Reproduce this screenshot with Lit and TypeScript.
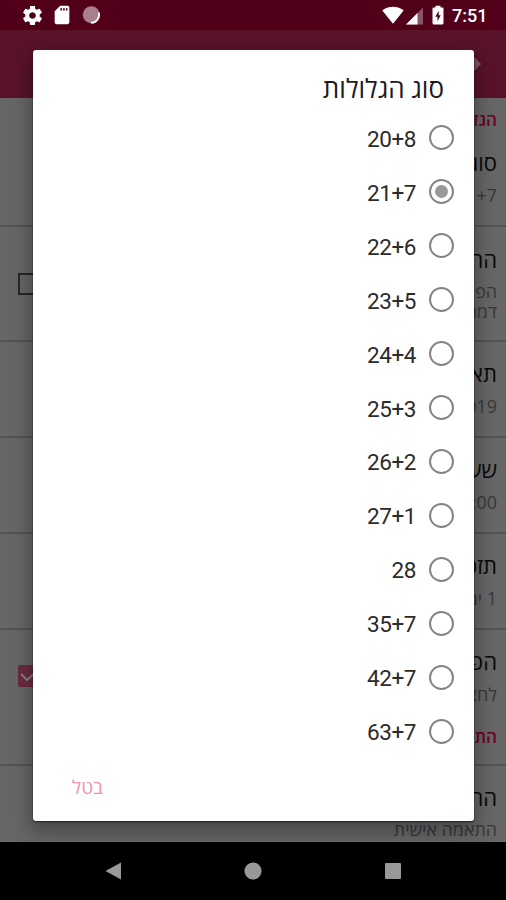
import { LitElement, html, css, svg, nothing } from "lit";
import { customElement, property } from "lit/decorators.js";
import { classMap } from "lit/directives/class-map.js";

interface Pref {
  title: string;
  lines: string[];
  height: "first" | "tall" | "normal" | "short" | "last";
  check?: "on" | "off";
}

@customElement("status-bar")
export class StatusBar extends LitElement {
  static styles = css`
    :host {
      display: flex;
      direction: ltr;
      align-items: center;
      height: 30px;
      box-sizing: border-box;
      padding: 0 20px 0 21px;
      background: #52001a;
      color: #fff;
      font: 500 18px/30px Roboto, sans-serif;
    }
    svg { display: block; flex: none; fill: #fff; }
    .card { margin-left: 7px; }
    .sync { margin-left: 9px; }
    .gap { flex: 1; }
    .signal { margin-left: 1px; }
    .battery { margin-left: 2px; }
    .time { margin: 2px 0 0 5px; width: 34px; white-space: nowrap; }
  `;
  render() {
    return html`
      <svg width="23" height="23" viewBox="0 0 24 24"><path d="M19.43 12.98c.04-.32.07-.64.07-.98s-.03-.66-.07-.98l2.11-1.65c.19-.15.24-.42.12-.64l-2-3.46c-.12-.22-.39-.3-.61-.22l-2.49 1c-.52-.4-1.08-.73-1.69-.98l-.38-2.65C14.46 2.18 14.25 2 14 2h-4c-.25 0-.46.18-.49.42l-.38 2.65c-.61.25-1.17.59-1.69.98l-2.49-1c-.23-.09-.49 0-.61.22l-2 3.46c-.13.22-.07.49.12.64l2.11 1.65c-.04.32-.07.65-.07.98s.03.66.07.98l-2.11 1.65c-.19.15-.24.42-.12.64l2 3.46c.12.22.39.3.61.22l2.49-1c.52.4 1.08.73 1.69.98l.38 2.65c.03.24.24.42.49.42h4c.25 0 .46-.18.49-.42l.38-2.65c.61-.25 1.17-.59 1.69-.98l2.49 1c.23.09.49 0 .61-.22l2-3.46c.12-.22.07-.49-.12-.64l-2.11-1.65zM12 15.5c-1.93 0-3.500-1.570-3.500-3.500s1.570-3.500 3.500-3.500 3.500 1.570 3.500 3.500-1.570 3.500-3.500 3.500z"/></svg>
      <svg class="card" width="22" height="22" viewBox="0 0 24 24"><path d="M18 2h-8L4.020 8 4 20c0 1.100.9 2 2 2h12c1.100 0 2-.9 2-2V4c0-1.100-.9-2-2-2zm-6 5h-1.800v-2.500h1.800zm3 0h-1.800v-2.500h1.800zm3 0h-1.800v-2.500h1.800z"/></svg>
      <svg class="sync" width="20" height="20" viewBox="0 0 20 20"><circle cx="9.300" cy="9.800" r="8.500" fill="#a8808d"/><path d="M16.800 7.500A8 8 0 0 1 9 17.800" fill="none" stroke="#fff" stroke-width="1.700"/></svg>
      <span class="gap"></span>
      <svg width="22" height="22" viewBox="0 0 24 24"><path d="M12.010 21.490L23.640 7c-.45-.34-4.930-4-11.640-4C5.280 3 .81 6.660.36 7l11.630 14.490.01.010.01-.01z"/></svg>
      <svg class="signal" width="22" height="22" viewBox="0 0 22 22"><path d="M1 20.500L18 3.500v17z" fill="#8c5266"/><path d="M1 20.500L12.500 9v11.500z"/></svg>
      <svg class="battery" width="18" height="22" viewBox="0 0 18 22"><path fill-rule="evenodd" d="M6.500 1.800h5v1.700H13.500q1 0 1 1V19q0 1.500-1.500 1.500H5Q3.500 20.500 3.500 19V4.500q0-1 1-1h2zM9.700 6.800L6.300 12.700h2.200v4.600L11.700 11.200H9.700z"/></svg>
      <span class="time">7:51</span>
    `;
  }
}

@customElement("pref-row")
export class PrefRow extends LitElement {
  @property({ attribute: false }) pref!: Pref;
  static styles = css`
    :host { display: block; }
    .row {
      display: flex;
      box-sizing: border-box;
      justify-content: space-between;
      padding: 15px 9px 0 17px;
      height: 96px;
      border-bottom: 2px solid #535353;
    }
    .first { height: 86px; padding-top: 5px; }
    .tall { height: 115px; padding-top: 16px; }
    .short { height: 86px; border: 0; }
    .last { border: 0; }
    .title { font-size: 22px; line-height: 32px; color: #090909; }
    .sub { font-size: 17.900px; line-height: 20px; color: #383838; margin-top: 7px; }
    .sub + .sub { margin-top: 0; }
    .tall .sub:nth-child(2) { margin-top: 6px; }
    .last .sub { margin-top: 6px; }
    svg { display: block; flex: none; }
    .row.short svg { margin-top: 19px; }
    .row.tall svg { margin-top: 29px; }
  `;
  render() {
    const p = this.pref;
    const box = p.check === "on"
      ? svg`<rect x="1" y="1" width="22" height="22" rx="2" fill="#6b2a41"/><path d="M4 10l6 6L20 7" fill="none" stroke="#858085" stroke-width="2"/>`
      : svg`<rect x="2" y="2" width="20" height="20" fill="none" stroke="#272727" stroke-width="2"/>`;
    return html`<div class=${classMap({ row: true, [p.height]: true })}>
      <div>
        <div class="title">${p.title}</div>
        ${p.lines.map((l) => html`<div class="sub">${l}</div>`)}
      </div>
      ${p.check ? html`<svg width="24" height="24" viewBox="0 0 24 24">${box}</svg>` : nothing}
    </div>`;
  }
}

@customElement("choice-dialog")
export class ChoiceDialog extends LitElement {
  @property() selected = "21+7";
  options = ["20+8", "21+7", "22+6", "23+5", "24+4", "25+3", "26+2", "27+1", "28", "35+7", "42+7", "63+7"];
  static styles = css`
    :host {
      display: flex;
      flex-direction: column;
      box-sizing: border-box;
      background: #fff;
      border-radius: 3px;
      box-shadow: 0 1px 2px rgba(0, 0, 0, 0.6), 0 8px 18px 4px rgba(0, 0, 0, 0.28);
    }
    .title {
      box-sizing: border-box;
      height: 61px;
      padding: 18px 30px 0 0;
      font-size: 26px;
      line-height: 40px;
      color: #1c1c1c;
    }
    .option {
      display: flex;
      align-items: center;
      gap: 13px;
      height: 53.930px;
      padding-right: 20px;
    }
    .radio {
      display: grid;
      place-items: center;
      box-sizing: border-box;
      width: 25px;
      height: 25px;
      border: 2px solid #848484;
      border-radius: 50%;
    }
    .dot { width: 13px; height: 13px; border-radius: 50%; background: #999; }
    .label {
      direction: ltr;
      padding-top: 2px;
      font: 22.500px/26px Roboto, sans-serif;
      letter-spacing: -0.4px;
      color: #2b2b2b;
    }
    .actions { display: flex; justify-content: flex-end; padding: 17px 0 0 39px; }
    .cancel { font-size: 19px; line-height: 24px; color: #f094b4; }
  `;
  render() {
    return html`
      <div class="title">סוג הגלולות</div>
      ${this.options.map((o) => html`<div class="option">
        <span class="radio">${o === this.selected ? html`<span class="dot"></span>` : nothing}</span>
        <span class="label">${o}</span>
      </div>`)}
      <div class="actions"><span class="cancel">בטל</span></div>
    `;
  }
}

@customElement("app-root")
export class AppRoot extends LitElement {
  general: Pref[] = [
    { title: "סוג", lines: ["21+7"], height: "first" },
    { title: "הראה", lines: ["הפיל", "דמם"], height: "tall", check: "off" },
    { title: "תאריך", lines: ["2019"], height: "normal" },
    { title: "שעה", lines: ["20:00"], height: "normal" },
    { title: "תזכורת", lines: ["1 ימים"], height: "normal" },
    { title: "הפעלה", lines: ["לחצן"], height: "short", check: "on" },
  ];
  custom: Pref[] = [{ title: "הראה", lines: ["התאמה אישית"], height: "last" }];

  static styles = css`
    :host {
      display: flex;
      flex-direction: column;
      position: relative;
      direction: rtl;
      width: 506px;
      height: 900px;
      overflow: hidden;
      background: #666;
      font-family: "Open Sans", "Noto Sans", sans-serif;
    }
    .appbar {
      display: flex;
      flex: none;
      align-items: center;
      height: 68px;
      padding-right: 24px;
      background: #591329;
    }
    .list { flex: 1; min-height: 0; overflow: hidden; }
    .heading {
      height: 43px;
      padding-right: 9px;
      font-size: 17px;
      font-weight: 600;
      line-height: 43px;
      color: #6e0028;
    }
    .divided { height: 48px; border-bottom: 2px solid #535353; line-height: 41px; }
    .nav {
      display: flex;
      flex: none;
      direction: ltr;
      align-items: center;
      justify-content: space-between;
      height: 58px;
      box-sizing: border-box;
      padding: 0 104px;
      background: #000;
    }
    choice-dialog { position: absolute; left: 33px; top: 50px; width: 441px; height: 771px; }
  `;
  render() {
    return html`
      <status-bar></status-bar>
      <div class="appbar">
        <svg width="24" height="24" viewBox="0 0 24 24"><path d="M2 12h18M15 6l6 6-6 6" fill="none" stroke="#80566a" stroke-width="3"/></svg>
      </div>
      <div class="list">
        <div class="heading">הגדרות</div>
        ${this.general.map((p) => html`<pref-row .pref=${p}></pref-row>`)}
        <div class="heading divided">התראות</div>
        ${this.custom.map((p) => html`<pref-row .pref=${p}></pref-row>`)}
      </div>
      <div class="nav">
        <svg width="18" height="18" viewBox="0 0 18 18"><path d="M17 .5v17L1.500 9z" fill="#999"/></svg>
        <svg width="18" height="18" viewBox="0 0 18 18"><circle cx="9" cy="9" r="8.600" fill="#999"/></svg>
        <svg width="18" height="18" viewBox="0 0 18 18"><rect x="1" y="1" width="16" height="16" rx="1" fill="#999"/></svg>
      </div>
      <choice-dialog></choice-dialog>
    `;
  }
}
